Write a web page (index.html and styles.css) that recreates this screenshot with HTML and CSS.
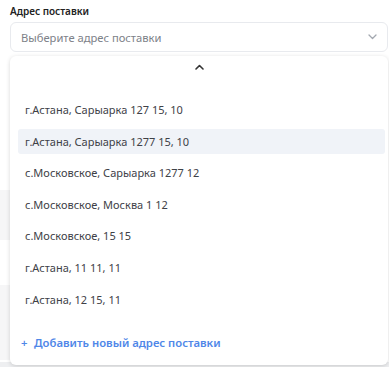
FILE: index.html
```html
<!DOCTYPE html>
<html>
<head>
<meta charset="utf-8">
<link rel="stylesheet" href="styles.css">
</head>
<body>
<div class="backdrop">
	<div class="ghost ghost-a"></div>
	<div class="ghost ghost-b"></div>
	<div class="ghost-bottom"></div>
</div>
<div class="field">
	<div class="field-label">Адрес поставки</div>
	<div class="select">
		<span class="placeholder">Выберите адрес поставки</span>
		<svg class="chevron" width="9" height="6" viewBox="0 0 9 6"><path d="M1 1l3.5 3.5L8 1" fill="none" stroke="#a3a8b0" stroke-width="1.3" stroke-linecap="round" stroke-linejoin="round"/></svg>
	</div>
	<div class="dropdown">
		<div class="scroll-up">
			<svg width="9" height="6" viewBox="0 0 9 6"><path d="M1 5l3.5-3.5L8 5" fill="none" stroke="#333" stroke-width="1.6" stroke-linecap="round" stroke-linejoin="round"/></svg>
		</div>
		<ul class="options">
			<li>г.Астана, Сарыарка 127 15, 10</li>
			<li class="active">г.Астана, Сарыарка 1277 15, 10</li>
			<li>с.Московское, Сарыарка 1277 12</li>
			<li>с.Московское, Москва 1 12</li>
			<li>с.Московское, 15 15</li>
			<li>г.Астана, 11 11, 11</li>
			<li>г.Астана, 12 15, 11</li>
		</ul>
		<div class="add-new"><span class="plus">+</span>Добавить новый адрес поставки</div>
	</div>
</div>
</body>
</html>
```
FILE: styles.css
```css
body {
  margin: 0;
  background: #fff;
  font-family: "Noto Sans", sans-serif;
  width: 389px;
  height: 367px;
  overflow: hidden;
  position: relative;
}
.backdrop {
  position: absolute;
  left: 0;
  top: 0;
  width: 389px;
  height: 367px;
}
.ghost {
  position: absolute;
  left: 0;
  width: 12px;
  background: #f6f6f7;
}
.ghost-a { top: 190px; height: 50px; }
.ghost-b { top: 285px; height: 75px; }
.ghost-bottom {
  position: absolute;
  left: 0;
  right: 0;
  top: 362px;
  height: 5px;
  background: #eeeff1;
}
.field {
  position: relative;
  padding: 5px 1px 0 10px;
}
.field-label {
  font-size: 10px;
  font-weight: 600;
  color: #222;
  line-height: 13px;
  margin-bottom: 4px;
}
.select {
  height: 30px;
  border: 1px solid #e8eaee;
  border-radius: 6px;
  display: flex;
  align-items: center;
  justify-content: space-between;
  padding: 0 10px 0 10px;
  box-sizing: border-box;
  background: #fff;
}
.placeholder {
  font-size: 11.2px;
  color: #7d8188;
}
.dropdown {
  margin-top: 4px;
  background: #fff;
  border-radius: 6px;
  box-shadow: 0 1px 4px rgba(0,0,0,0.16);
  padding-bottom: 12px;
}
.scroll-up {
  display: flex;
  justify-content: center;
  padding-top: 8px;
  height: 16px;
}
.options {
  list-style: none;
  margin: 0;
  padding: 17px 3px 0 8px;
}
.options li {
  height: 25px;
  line-height: 25px;
  margin-bottom: 6.6px;
  padding-left: 7px;
  font-size: 11px;
  color: #3e4147;
  border-radius: 3px;
}
.options li.active {
  background: #f0f3f8;
}
.add-new {
  margin-top: 21px;
  padding-left: 11px;
  font-size: 11.3px;
  font-weight: 600;
  color: #4f87e8;
  line-height: 20px;
}
.plus {
  display: inline-block;
  width: 13px;
}
```
